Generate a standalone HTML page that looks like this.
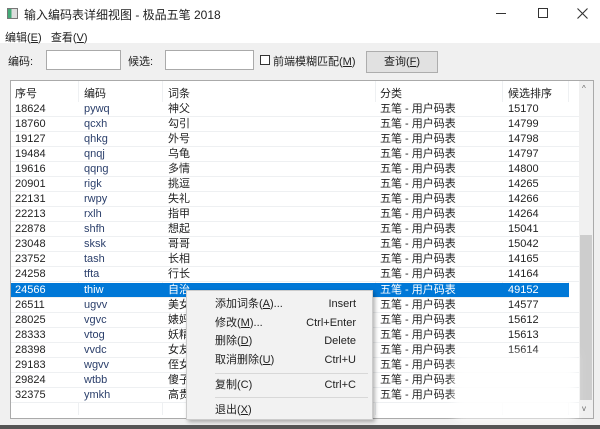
<!DOCTYPE html>
<html><head><meta charset="utf-8"><style>
*{margin:0;padding:0;box-sizing:border-box}
body{width:600px;height:429px;overflow:hidden;background:#f0f0f0;font-family:"Liberation Sans","Noto Sans CJK SC",sans-serif;font-size:11px;color:#222;position:relative}
.a{position:absolute;white-space:nowrap}
.row{position:absolute;left:11px;width:568px;height:15px;border-bottom:1px solid #eef0f2;background:#fff}
.row span{position:absolute;top:1px;line-height:13px}
.sel{background:#0078d7;color:#fff}
.menu{position:absolute;left:186px;top:290px;width:187px;height:130px;background:#f2f2f2;border:1px solid #ccc;box-shadow:2px 2px 4px rgba(0,0,0,.3)}
.mi{position:absolute;left:28px;right:16px;height:16px;line-height:16px}
.mi b{font-weight:normal;position:absolute;right:0}
.sep{position:absolute;left:28px;right:4px;height:1px;background:#d8d8d8}
</style></head><body>
<div class="a" style="left:0;top:0;width:600px;height:30px;background:#fff"></div>
<div class="a" style="left:7px;top:8px;width:11px;height:11px;border:1px solid #777;background:linear-gradient(90deg,#4a7 0 40%,#ddd 40%)"></div>
<div class="a" style="left:24px;top:6px;font-size:12px">输入编码表详细视图 - 极品五笔 2018</div>
<div class="a" style="left:496px;top:13px;width:10px;height:1px;background:#333"></div>
<div class="a" style="left:538px;top:8px;width:10px;height:10px;border:1px solid #333"></div>
<svg class="a" style="left:577px;top:8px" width="11" height="11"><path d="M0.5 0.5L10.5 10.5M10.5 0.5L0.5 10.5" stroke="#333" stroke-width="1.1"/></svg>
<div class="a" style="left:0;top:30px;width:600px;height:13px;background:#fff"></div>
<div class="a" style="left:5px;top:29px">编辑(<u>E</u>)&nbsp;&nbsp;&nbsp;查看(<u>V</u>)</div>
<div class="a" style="left:8px;top:53px">编码:</div>
<div class="a" style="left:46px;top:50px;width:75px;height:20px;background:#fff;border:1px solid #aaa"></div>
<div class="a" style="left:128px;top:53px">候选:</div>
<div class="a" style="left:165px;top:50px;width:89px;height:20px;background:#fff;border:1px solid #aaa"></div>
<div class="a" style="left:260px;top:55px;width:10px;height:10px;border:1px solid #333;background:#fff"></div>
<div class="a" style="left:273px;top:53px">前端模糊匹配(<u>M</u>)</div>
<div class="a" style="left:366px;top:51px;width:72px;height:22px;background:#e1e1e1;border:1px solid #adadad;text-align:center;line-height:20px">查询(<u>F</u>)</div>
<div class="a" style="left:10px;top:80px;width:584px;height:339px;background:#fff;border:1px solid #aaa"></div>
<div class="a" style="left:11px;top:81px;width:568px;height:21px;background:#fff"></div>
<div class="a" style="left:78px;top:81px;width:1px;height:334px;background:#eef0f2"></div>
<div class="a" style="left:162px;top:81px;width:1px;height:334px;background:#eef0f2"></div>
<div class="a" style="left:375px;top:81px;width:1px;height:334px;background:#eef0f2"></div>
<div class="a" style="left:502px;top:81px;width:1px;height:334px;background:#eef0f2"></div>
<div class="a" style="left:568px;top:81px;width:1px;height:334px;background:#eef0f2"></div>
<div class="a" style="left:15px;top:85px">序号</div>
<div class="a" style="left:84px;top:85px">编码</div>
<div class="a" style="left:168px;top:85px">词条</div>
<div class="a" style="left:380px;top:85px">分类</div>
<div class="a" style="left:508px;top:85px">候选排序</div>
<div class="a" style="left:579px;top:81px;width:14px;height:337px;background:#f0f0f0"></div>
<div class="a" style="left:580px;top:235px;width:12px;height:165px;background:#cdcdcd"></div>
<div class="a" style="left:582px;top:84px;font-size:8px;color:#666">^</div>
<div class="a" style="left:582px;top:404px;font-size:8px;color:#666">v</div>
<div class="row" style="top:102px"><span style="left:4px">18624</span><span style="left:73px;color:#2b3f6b">pywq</span><span style="left:157px">神父</span><span style="left:369px">五笔 - 用户码表</span><span style="left:497px">15170</span></div>
<div class="row" style="top:117px"><span style="left:4px">18760</span><span style="left:73px;color:#2b3f6b">qcxh</span><span style="left:157px">勾引</span><span style="left:369px">五笔 - 用户码表</span><span style="left:497px">14799</span></div>
<div class="row" style="top:132px"><span style="left:4px">19127</span><span style="left:73px;color:#2b3f6b">qhkg</span><span style="left:157px">外号</span><span style="left:369px">五笔 - 用户码表</span><span style="left:497px">14798</span></div>
<div class="row" style="top:147px"><span style="left:4px">19484</span><span style="left:73px;color:#2b3f6b">qnqj</span><span style="left:157px">乌龟</span><span style="left:369px">五笔 - 用户码表</span><span style="left:497px">14797</span></div>
<div class="row" style="top:162px"><span style="left:4px">19616</span><span style="left:73px;color:#2b3f6b">qqng</span><span style="left:157px">多情</span><span style="left:369px">五笔 - 用户码表</span><span style="left:497px">14800</span></div>
<div class="row" style="top:177px"><span style="left:4px">20901</span><span style="left:73px;color:#2b3f6b">rigk</span><span style="left:157px">挑逗</span><span style="left:369px">五笔 - 用户码表</span><span style="left:497px">14265</span></div>
<div class="row" style="top:192px"><span style="left:4px">22131</span><span style="left:73px;color:#2b3f6b">rwpy</span><span style="left:157px">失礼</span><span style="left:369px">五笔 - 用户码表</span><span style="left:497px">14266</span></div>
<div class="row" style="top:207px"><span style="left:4px">22213</span><span style="left:73px;color:#2b3f6b">rxlh</span><span style="left:157px">指甲</span><span style="left:369px">五笔 - 用户码表</span><span style="left:497px">14264</span></div>
<div class="row" style="top:222px"><span style="left:4px">22878</span><span style="left:73px;color:#2b3f6b">shfh</span><span style="left:157px">想起</span><span style="left:369px">五笔 - 用户码表</span><span style="left:497px">15041</span></div>
<div class="row" style="top:237px"><span style="left:4px">23048</span><span style="left:73px;color:#2b3f6b">sksk</span><span style="left:157px">哥哥</span><span style="left:369px">五笔 - 用户码表</span><span style="left:497px">15042</span></div>
<div class="row" style="top:252px"><span style="left:4px">23752</span><span style="left:73px;color:#2b3f6b">tash</span><span style="left:157px">长相</span><span style="left:369px">五笔 - 用户码表</span><span style="left:497px">14165</span></div>
<div class="row" style="top:267px"><span style="left:4px">24258</span><span style="left:73px;color:#2b3f6b">tfta</span><span style="left:157px">行长</span><span style="left:369px">五笔 - 用户码表</span><span style="left:497px">14164</span></div>
<div class="row sel" style="top:283px;width:558px"><span style="left:4px">24566</span><span style="left:73px">thiw</span><span style="left:157px">自治</span><span style="left:369px">五笔 - 用户码表</span><span style="left:497px">49152</span></div>
<div class="row" style="top:298px"><span style="left:4px">26511</span><span style="left:73px;color:#2b3f6b">ugvv</span><span style="left:157px">美女</span><span style="left:369px">五笔 - 用户码表</span><span style="left:497px">14577</span></div>
<div class="row" style="top:313px"><span style="left:4px">28025</span><span style="left:73px;color:#2b3f6b">vgvc</span><span style="left:157px">婊妈</span><span style="left:369px">五笔 - 用户码表</span><span style="left:497px">15612</span></div>
<div class="row" style="top:328px"><span style="left:4px">28333</span><span style="left:73px;color:#2b3f6b">vtog</span><span style="left:157px">妖精</span><span style="left:369px">五笔 - 用户码表</span><span style="left:497px">15613</span></div>
<div class="row" style="top:343px"><span style="left:4px">28398</span><span style="left:73px;color:#2b3f6b">vvdc</span><span style="left:157px">女友</span><span style="left:369px">五笔 - 用户码表</span><span style="left:497px">15614</span></div>
<div class="row" style="top:358px"><span style="left:4px">29183</span><span style="left:73px;color:#2b3f6b">wgvv</span><span style="left:157px">侄女</span><span style="left:369px">五笔 - 用户码表</span></div>
<div class="row" style="top:373px"><span style="left:4px">29824</span><span style="left:73px;color:#2b3f6b">wtbb</span><span style="left:157px">傻子</span><span style="left:369px">五笔 - 用户码表</span></div>
<div class="row" style="top:388px"><span style="left:4px">32375</span><span style="left:73px;color:#2b3f6b">ymkh</span><span style="left:157px">高贵</span><span style="left:369px">五笔 - 用户码表</span></div>
<div class="a" style="left:455px;top:355px;width:120px;height:64px;background:#fff;filter:blur(5px);opacity:.9"></div>
<div class="menu">
<div class="mi" style="top:5px">添加词条(<u>A</u>)...<b>Insert</b></div>
<div class="mi" style="top:24px">修改(<u>M</u>)...<b>Ctrl+Enter</b></div>
<div class="mi" style="top:42px">删除(<u>D</u>)<b>Delete</b></div>
<div class="mi" style="top:61px">取消删除(<u>U</u>)<b>Ctrl+U</b></div>
<div class="sep" style="top:82px"></div>
<div class="mi" style="top:86px">复制(C)<b>Ctrl+C</b></div>
<div class="sep" style="top:106px"></div>
<div class="mi" style="top:111px">退出(<u>X</u>)</div>
</div>
<div class="a" style="left:0;top:425px;width:600px;height:4px;background:#555"></div>
</body></html>
